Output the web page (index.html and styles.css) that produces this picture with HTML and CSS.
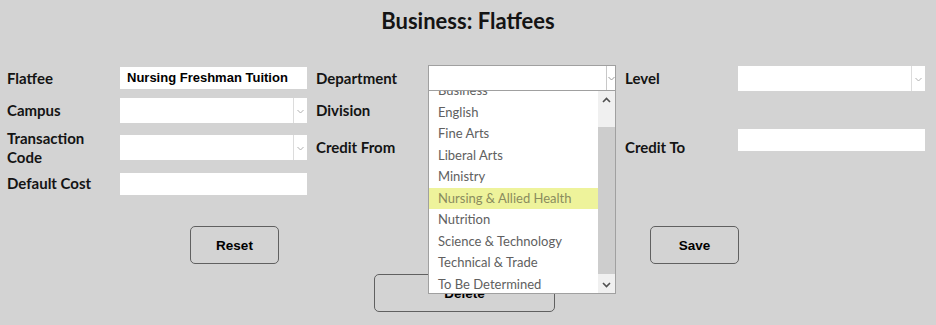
FILE: index.html
```html
<!DOCTYPE html>
<html>
<head>
<meta charset="utf-8">
<link rel="stylesheet" href="styles.css">
</head>
<body>
<div class="page">
  <h1 class="title">Business: Flatfees</h1>
  <div class="form">
    <div class="label">Flatfee</div>
    <div class="field"><div class="input text">Nursing Freshman Tuition</div></div>
    <div class="label">Department</div>
    <div class="field dept">
      <div class="select focused"><span class="sep"></span><svg class="chev" width="7" height="5" viewBox="0 0 7 5"><path d="M0.5 1 L3.5 4 L6.5 1" fill="none" stroke="#9a9a9a" stroke-width="1"/></svg></div>
      <div class="list">
        <div class="opts">
          <div class="opt">Business</div>
          <div class="opt">English</div>
          <div class="opt">Fine Arts</div>
          <div class="opt">Liberal Arts</div>
          <div class="opt">Ministry</div>
          <div class="opt hl">Nursing &amp; Allied Health</div>
          <div class="opt">Nutrition</div>
          <div class="opt">Science &amp; Technology</div>
          <div class="opt">Technical &amp; Trade</div>
          <div class="opt">To Be Determined</div>
        </div>
        <div class="sbar">
          <div class="sbtn"><svg width="9" height="6" viewBox="0 0 9 6"><path d="M1 5 L4.5 1.5 L8 5" fill="none" stroke="#505050" stroke-width="1.6"/></svg></div>
          <div class="strack"><div class="thumb"></div></div>
          <div class="sbtn"><svg width="9" height="6" viewBox="0 0 9 6"><path d="M1 1 L4.5 4.5 L8 1" fill="none" stroke="#505050" stroke-width="1.6"/></svg></div>
        </div>
      </div>
    </div>
    <div class="label">Level</div>
    <div class="field last"><div class="select"><span class="sep"></span><svg class="chev" width="7" height="5" viewBox="0 0 7 5"><path d="M0.5 1 L3.5 4 L6.5 1" fill="none" stroke="#b0b0b0" stroke-width="1"/></svg></div></div>

    <div class="label">Campus</div>
    <div class="field"><div class="select"><span class="sep"></span><svg class="chev" width="7" height="5" viewBox="0 0 7 5"><path d="M0.5 1 L3.5 4 L6.5 1" fill="none" stroke="#b0b0b0" stroke-width="1"/></svg></div></div>
    <div class="label">Division</div>
    <div class="field"></div>
    <div class="label"></div>
    <div class="field last"></div>

    <div class="label two">Transaction Code</div>
    <div class="field"><div class="select"><span class="sep"></span><svg class="chev" width="7" height="5" viewBox="0 0 7 5"><path d="M0.5 1 L3.5 4 L6.5 1" fill="none" stroke="#b0b0b0" stroke-width="1"/></svg></div></div>
    <div class="label">Credit From</div>
    <div class="field"></div>
    <div class="label">Credit To</div>
    <div class="field last top"><div class="input"></div></div>

    <div class="label">Default Cost</div>
    <div class="field"><div class="input"></div></div>
    <div class="label"></div>
    <div class="field"></div>
    <div class="label"></div>
    <div class="field last"></div>
  </div>
  <div class="actions">
    <button class="btn">Reset</button>
    <button class="btn">Save</button>
  </div>
  <div class="actions2">
    <button class="btn wide">Delete</button>
  </div>
</div>
</body>
</html>
```

FILE: styles.css
```css
html, body {
  margin: 0;
  padding: 0;
  background: #d3d3d3;
}
.page {
  width: 936px;
  height: 325px;
  overflow: hidden;
  font-family: Lato, "Open Sans", sans-serif;
  color: #141414;
}
.title {
  margin: 0;
  height: 65px;
  box-sizing: border-box;
  padding-top: 8px;
  font-size: 22px;
  line-height: 26px;
  font-weight: 700;
  text-align: center;
}
.form {
  display: grid;
  grid-template-columns: 113px 196px 112px 197px 113px 187px;
  grid-template-rows: 26px 26px 37px 23px;
  row-gap: 6px;
  padding-left: 7px;
  align-items: center;
}
.label {
  font-size: 15px;
  font-weight: 700;
  line-height: 19px;
}
.field {
  margin-right: 9px;
  position: relative;
  height: 100%;
  display: flex;
  align-items: center;
}
.field.last { margin-right: 0; }
.field.top { align-items: flex-start; }
.input {
  width: 100%;
  height: 22px;
  background: #fff;
  box-sizing: border-box;
  padding-left: 7px;
  font-family: "Liberation Sans", Arial, sans-serif;
  font-weight: 700;
  font-size: 13px;
  line-height: 22px;
  color: #000;
}
.select {
  width: 100%;
  height: 25px;
  background: #fff;
  position: relative;
  box-sizing: border-box;
}
.select.focused {
  height: 26px;
  border: 1px solid #a0a0a0;
}
.sep {
  position: absolute;
  right: 13px;
  top: 0;
  bottom: 0;
  width: 1px;
  background: #dcdcdc;
}
.focused .sep { background: #c8c8c8; right: 8px; }
.chev {
  position: absolute;
  right: 3px;
  top: 11px;
}
.focused .chev { right: 0px; top: 10px; }
.list {
  position: absolute;
  left: 0;
  top: 25px;
  width: 188px;
  height: 204px;
  box-sizing: border-box;
  border: 1px solid #a0a0a0;
  background: #fff;
  display: flex;
  overflow: hidden;
  z-index: 5;
}
.opts {
  flex: 1;
  overflow: hidden;
  margin-top: -11px;
}
.opt {
  height: 21.5px;
  line-height: 21.5px;
  padding-left: 9px;
  font-size: 13px;
  color: #606060;
}
.opt.hl {
  background: #eef39b;
  color: #8a8c5e;
}
.sbar {
  width: 17px;
  display: flex;
  flex-direction: column;
  background: #f0f0f0;
}
.sbtn {
  height: 17px;
  display: flex;
  align-items: center;
  justify-content: center;
}
.strack {
  flex: 1;
  padding-top: 19px;
  padding-bottom: 2px;
  display: flex;
}
.thumb {
  flex: 1;
  background: #cdcdcd;
}
.actions {
  display: flex;
  padding-left: 190px;
  gap: 371px;
  margin-top: 31px;
}
.actions2 {
  display: flex;
  justify-content: center;
  padding-right: 7px;
  margin-top: 10px;
}
.btn {
  width: 89px;
  height: 38px;
  border: 1px solid #606060;
  border-radius: 5px;
  background: #d3d3d3;
  font-family: "Liberation Sans", Arial, sans-serif;
  font-weight: 700;
  font-size: 13.5px;
  color: #000;
  padding: 0;
}
.btn.wide { width: 181px; }
```
